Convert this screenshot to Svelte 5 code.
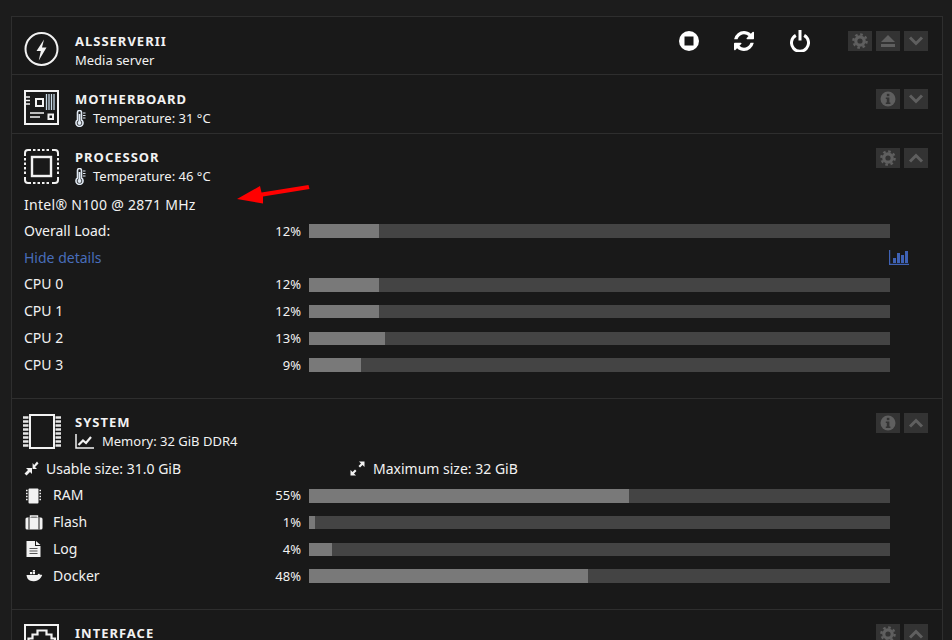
<script>
  const cpus = [
    { name: 'CPU 0', load: 12 },
    { name: 'CPU 1', load: 12 },
    { name: 'CPU 2', load: 13 },
    { name: 'CPU 3', load: 9 }
  ];
  const memory = [
    { name: 'RAM', load: 55, icon: 'ram' },
    { name: 'Flash', load: 1, icon: 'flash' },
    { name: 'Log', load: 4, icon: 'log' },
    { name: 'Docker', load: 48, icon: 'docker' }
  ];
</script>

{#snippet bar(load)}
  <span class="pct">{load}%</span>
  <span class="track"><span class="fill" style="width: {load}%"></span></span>
{/snippet}

{#snippet gear()}
  <svg width="16" height="16" viewBox="0 0 16 16">
    <circle cx="8" cy="8" r="4.2" fill="none" stroke="#5f5f5f" stroke-width="3.2" />
    <circle cx="8" cy="8" r="6.6" fill="none" stroke="#5f5f5f" stroke-width="2.4" stroke-dasharray="2.6 2.58" />
  </svg>
{/snippet}

{#snippet info()}
  <svg width="16" height="16" viewBox="0 0 16 16">
    <circle cx="8" cy="8" r="7.5" fill="#5f5f5f" />
    <rect x="6.8" y="2.8" width="2.6" height="2.4" fill="#333" />
    <path d="M5.8 6.5h3.6v5h1v1.4H5.8v-1.4h1v-3.6h-1z" fill="#333" />
  </svg>
{/snippet}

{#snippet chevron(up)}
  <svg width="16" height="12" viewBox="0 0 16 12">
    <path d={up ? 'M2 9.5 8 3.5 14 9.5' : 'M2 2.5 8 8.5 14 2.5'} fill="none" stroke="#5f5f5f" stroke-width="3" />
  </svg>
{/snippet}

{#snippet thermometer()}
  <svg class="sub-icon thermo" width="11" height="17" viewBox="0 0 11 17">
    <path d="M2.5 10V2.5a2 2 0 0 1 4 0V10a3.5 3.5 0 1 1-4 0z" fill="none" stroke="#dfe8f2" stroke-width="1.6" />
    <circle cx="4.5" cy="13" r="2" fill="#dfe8f2" />
    <rect x="3.6" y="4" width="1.8" height="8" fill="#dfe8f2" />
    <path d="M8 3h2.500M8 5.500h2.500M8 8h2.500" stroke="#dfe8f2" stroke-width="1" />
  </svg>
{/snippet}

<div class="page">
  <div class="panel">
    <section class="compact">
      <div class="head">
        <svg class="main-icon" width="36" height="36" viewBox="0 0 36 36">
          <circle cx="17.5" cy="17" r="16" fill="none" stroke="#f2f2f2" stroke-width="2" />
          <path d="M20 7.500 12.500 19h4.300l-2 9.500L22.500 15.500h-4.500z" fill="#f2f2f2" />
        </svg>
        <div class="titles">
          <div class="title">AlsServerII</div>
          <div class="sub">Media server</div>
        </div>
        <div class="power">
          <svg width="20" height="20" viewBox="0 0 20 20">
            <circle cx="10" cy="10" r="10" fill="#fff" />
            <rect x="5.500" y="5.500" width="9" height="9" fill="#191919" />
          </svg>
          <svg width="20" height="20" viewBox="0 0 1536 1536">
            <path d="M1511 928q0 5-1 7-64 268-268 434.500t-478 166.500q-146 0-282.500-55t-243.500-157l-129 129q-19 19-45 19t-45-19-19-45v-448q0-26 19-45t45-19h448q26 0 45 19t19 45-19 45l-137 137q71 66 161 102t187 36q134 0 250-65t186-179q11-17 53-117 8-23 30-23h192q13 0 22.500 9.500t9.500 22.500zm25-800v448q0 26-19 45t-45 19h-448q-26 0-45-19t-19-45 19-45l138-138q-148-137-349-137-134 0-250 65t-186 179q-11 17-53 117-8 23-30 23h-199q-13 0-22.500-9.500t-9.500-22.500v-7q65-268 270-434.500t480-166.500q146 0 284 55.500t245 156.500l130-129q19-19 45-19t45 19 19 45z" fill="#fff" />
          </svg>
          <svg width="20" height="22" viewBox="0 0 20 22">
            <path d="M5.800 5.400a8.500 8.500 0 1 0 8.400 0" fill="none" stroke="#fff" stroke-width="3" />
            <path d="M10 0v10.500" stroke="#fff" stroke-width="3" />
          </svg>
        </div>
        <div class="btns">
          <span class="btn">{@render gear()}</span>
          <span class="btn">
            <svg width="16" height="14" viewBox="0 0 16 14">
              <path d="M8 1 15 8H1z" fill="#5f5f5f" />
              <rect x="1" y="10" width="14" height="3" fill="#5f5f5f" />
            </svg>
          </span>
          <span class="btn">{@render chevron(false)}</span>
        </div>
      </div>
    </section>

    <section class="compact second">
      <div class="head">
        <svg class="main-icon" width="36" height="36" viewBox="0 0 36 36">
          <rect x="1" y="1" width="33" height="33" fill="none" stroke="#f2f2f2" stroke-width="2" />
          <path d="M2 7h4M2 10.500h4M2 14h4" stroke="#f2f2f2" stroke-width="1.500" />
          <rect x="12" y="9" width="7" height="7" fill="none" stroke="#f2f2f2" stroke-width="2" />
          <path d="M22.500 4v16M25 4v16M27.500 4v16M30 4v16" stroke="#c9dbe8" stroke-width="1.300" />
          <path d="M6 23h14M6 27h10" stroke="#f2f2f2" stroke-width="1.600" />
          <rect x="24.500" y="24.500" width="4.500" height="4.500" fill="none" stroke="#f2f2f2" stroke-width="2" />
        </svg>
        <div class="titles">
          <div class="title">Motherboard</div>
          <div class="sub">{@render thermometer()}Temperature: 31 °C</div>
        </div>
        <div class="btns">
          <span class="btn">{@render info()}</span>
          <span class="btn">{@render chevron(false)}</span>
        </div>
      </div>
    </section>

    <section>
      <div class="head">
        <svg class="main-icon" width="36" height="36" viewBox="0 0 36 36">
          <path d="M1 7V4a3 3 0 0 1 3-3h3M28 1h3a3 3 0 0 1 3 3v3M34 28v3a3 3 0 0 1-3 3h-3M7 34H4a3 3 0 0 1-3-3v-3" fill="none" stroke="#f2f2f2" stroke-width="2" />
          <path d="M9 1h18M9 34h18M1 9v18M34 9v18" fill="none" stroke="#f2f2f2" stroke-width="2" stroke-dasharray="2.500 2" />
          <rect x="8" y="8" width="19" height="19" fill="none" stroke="#f2f2f2" stroke-width="2.400" />
        </svg>
        <div class="titles">
          <div class="title">Processor</div>
          <div class="sub">{@render thermometer()}Temperature: 46 °C</div>
        </div>
        <div class="btns">
          <span class="btn">{@render gear()}</span>
          <span class="btn">{@render chevron(true)}</span>
        </div>
      </div>
      <div class="row cpu-name">Intel® N100 @ 2871 MHz</div>
      <div class="row load">
        <span>Overall Load:</span>
        {@render bar(12)}
      </div>
      <div class="row details">
        <span class="link">Hide details</span>
        <svg width="20" height="15" viewBox="0 0 20 15">
          <path d="M0.600 0v14.400H20" fill="none" stroke="#3f62b5" stroke-width="1.200" />
          <rect x="4" y="8" width="3" height="5" fill="#3f62b5" />
          <rect x="8" y="3" width="3" height="10" fill="#3f62b5" />
          <rect x="12" y="5" width="3" height="8" fill="#3f62b5" />
          <rect x="16" y="1" width="3" height="12" fill="#3f62b5" />
        </svg>
      </div>
      {#each cpus as cpu}
        <div class="row load">
          <span>{cpu.name}</span>
          {@render bar(cpu.load)}
        </div>
      {/each}
    </section>

    <section>
      <div class="head">
        <svg class="main-icon wide" width="38" height="36" viewBox="0 0 38 36">
          <rect x="7" y="1" width="24" height="33" fill="none" stroke="#f2f2f2" stroke-width="2" />
          <path d="M0 3.500h5.500M0 7.500h5.500M0 11.500h5.500M0 15.500h5.500M0 19.500h5.500M0 23.500h5.500M0 27.500h5.500M0 31.500h5.500M32.500 3.500H38M32.500 7.500H38M32.500 11.500H38M32.500 15.500H38M32.500 19.500H38M32.500 23.500H38M32.500 27.500H38M32.500 31.500H38" stroke="#e6e6e6" stroke-width="2.600" />
        </svg>
        <div class="titles">
          <div class="title">System</div>
          <div class="sub">
            <svg class="sub-icon chart" width="19" height="15" viewBox="0 0 19 15">
              <path d="M1 0v14h18" fill="none" stroke="#f2f2f2" stroke-width="1.500" />
              <path d="M3.500 11 8 6.500l3 2.500 5-6" fill="none" stroke="#f2f2f2" stroke-width="2.200" />
            </svg>
            Memory: 32 GiB DDR4
          </div>
        </div>
        <div class="btns">
          <span class="btn">{@render info()}</span>
          <span class="btn">{@render chevron(true)}</span>
        </div>
      </div>
      <div class="row sizes">
        <span class="size">
          <svg width="15" height="15" viewBox="0 0 15 15">
            <path d="M0.500 12.500 4 9 2 7h6v6l-2-2-3.500 3.500zM14.500 2.500 11 6l2 2H8.600V2l1.600 2L13 .5z" fill="#f2f2f2" />
          </svg>
          Usable size: 31.0 GiB
        </span>
        <span class="size">
          <svg width="15" height="15" viewBox="0 0 15 15">
            <path d="M9 .5h5.500V6l-2-2L10 6.500 8.500 5 11 2.500zM6 14.500H.5V9l2 2L5 8.500 6.500 10 4 12.500z" fill="#f2f2f2" />
          </svg>
          Maximum size: 32 GiB
        </span>
      </div>
      {#each memory as m}
        <div class="row load">
          <span class="named">
            <span class="mem-icon">
              {#if m.icon === 'ram'}
                <svg width="15" height="16" viewBox="0 0 15 16">
                  <rect x="2.500" y="0.500" width="10" height="15" rx="1" fill="#f2f2f2" />
                  <path d="M0 2.500h1.600M0 5.500h1.600M0 8.500h1.600M0 11.500h1.600M13.400 2.500H15M13.400 5.500H15M13.400 8.500H15M13.400 11.500H15" stroke="#f2f2f2" stroke-width="1.400" />
                </svg>
              {:else if m.icon === 'flash'}
                <svg class="flash" width="18" height="15" viewBox="0 0 18 15">
                  <path d="M5.500 2.500V1h7v1.500" fill="none" stroke="#f2f2f2" stroke-width="1.400" />
                  <rect x="0.500" y="2.500" width="17" height="12" rx="1.500" fill="#f2f2f2" />
                  <path d="M4 2.500v12M14 2.500v12" stroke="#191919" stroke-width="1" />
                </svg>
              {:else if m.icon === 'log'}
                <svg width="15" height="16" viewBox="0 0 15 16">
                  <path d="M0.500 0h8.500v5h5.500v11H0.500z" fill="#f2f2f2" />
                  <path d="M10 0v4h4.500z" fill="#f2f2f2" />
                  <path d="M3.500 7.500h8M3.500 10h8M3.500 12.500h8" stroke="#555" stroke-width="1.100" />
                </svg>
              {:else}
                <svg width="17" height="12" viewBox="0 0 17 12">
                  <path d="M0.500 5h11c.3-1 1-1.400 1.800-1.200.3.700.6 1 1.200 1 .8 0 1.200.2 1.700.2-1 2.500-3 6-8.200 6.200C3 11.400 1 9 .5 5z" fill="#f2f2f2" />
                  <rect x="4" y="2" width="2.200" height="2.200" fill="#f2f2f2" />
                  <rect x="6.800" y="2" width="2.200" height="2.200" fill="#f2f2f2" />
                  <rect x="6.800" y="0" width="2.200" height="1.600" fill="#f2f2f2" />
                </svg>
              {/if}
            </span>
            {m.name}
          </span>
          {@render bar(m.load)}
        </div>
      {/each}
    </section>

    <section class="last">
      <div class="head">
        <svg class="main-icon" width="36" height="36" viewBox="0 0 36 36">
          <rect x="1" y="1" width="33" height="33" fill="none" stroke="#f2f2f2" stroke-width="2" />
          <path d="M4.500 36V14.500h4v-4h5v-4h9v4h5v4h3.500V36" fill="none" stroke="#f2f2f2" stroke-width="2.200" />
        </svg>
        <div class="titles">
          <div class="title">Interface</div>
        </div>
        <div class="btns">
          <span class="btn">{@render gear()}</span>
          <span class="btn">{@render chevron(true)}</span>
        </div>
      </div>
    </section>
  </div>

  <svg class="arrow" width="80" height="24" viewBox="0 0 80 24">
    <path d="M0 14 23 1 24.500 7.500 71.500 0 72.500 4 26 11.500 26 18.500z" fill="#f00" />
  </svg>
</div>

<style>
  :global(body) {
    background: #1c1c1c;
  }

  .page {
    position: relative;
    height: 640px;
    overflow: hidden;
    font-family: "Noto Sans", "Open Sans", sans-serif;
    font-size: 13px;
    color: #f2f2f2;
  }

  .panel {
    margin: 16px 9px 0 11px;
    border: 1px solid #2e2e2e;
    border-bottom: 0;
    background: #191919;
  }

  section {
    padding: 14px 52px 19px 12px;
    border-bottom: 1px solid #2e2e2e;
  }

  section.compact {
    padding-top: 15px;
    padding-bottom: 4px;
  }

  section.second {
    padding-bottom: 5px;
  }

  section.last {
    border-bottom: 0;
  }

  .head {
    display: flex;
    align-items: flex-start;
    margin-right: -38px;
    margin-bottom: 5px;
  }

  .compact .head {
    margin-bottom: 0;
  }

  .compact .btns,
  .compact .power {
    margin-top: -1px;
  }

  .main-icon {
    flex: none;
    margin-top: 1px;
    margin-right: 15px;
  }

  .main-icon.wide {
    margin-left: -1px;
    margin-right: 14px;
  }

  .compact .main-icon,
  .last .main-icon {
    margin-top: 0;
  }

  .titles {
    flex: 1;
  }

  .title {
    height: 19px;
    line-height: 19px;
    font-weight: 700;
    letter-spacing: 1px;
    text-transform: uppercase;
  }

  .sub {
    display: flex;
    align-items: center;
    height: 19px;
    line-height: 19px;
  }

  .sub-icon {
    flex: none;
  }

  .thermo {
    margin-right: 7px;
  }

  .chart {
    margin-right: 8px;
  }

  .power {
    display: flex;
    align-items: center;
    gap: 35.5px;
    margin-right: 38px;
    height: 20px;
  }

  .btns {
    display: flex;
    gap: 3.5px;
  }

  .btn {
    display: flex;
    align-items: center;
    justify-content: center;
    width: 24.5px;
    height: 20px;
    background: #333;
  }

  .row {
    height: 26.8px;
    line-height: 26.8px;
    font-size: 14px;
    white-space: nowrap;
  }

  .row.cpu-name {
    line-height: 28.8px;
    letter-spacing: 0.3px;
  }

  .load {
    display: grid;
    grid-template-columns: 239px 38px 589px;
    align-items: center;
  }

  .pct {
    font-size: 13px;
    text-align: right;
  }

  .track {
    display: block;
    height: 13.6px;
    margin-left: 8px;
    width: 581px;
    background: #444;
  }

  .fill {
    display: block;
    height: 100%;
    background: #797979;
  }

  .details {
    display: flex;
    align-items: center;
    justify-content: space-between;
    margin-right: -19px;
  }

  .link {
    color: #486dba;
  }

  .sizes {
    display: grid;
    grid-template-columns: 326px 1fr;
  }

  .size {
    display: flex;
    align-items: center;
    gap: 7px;
  }

  .size + .size {
    gap: 8px;
  }

  .named {
    display: flex;
    align-items: center;
  }

  .mem-icon {
    display: flex;
    width: 29px;
    padding-left: 2px;
    box-sizing: border-box;
  }

  .flash {
    margin-left: -1px;
  }

  .arrow {
    position: absolute;
    left: 237px;
    top: 185px;
  }
</style>
